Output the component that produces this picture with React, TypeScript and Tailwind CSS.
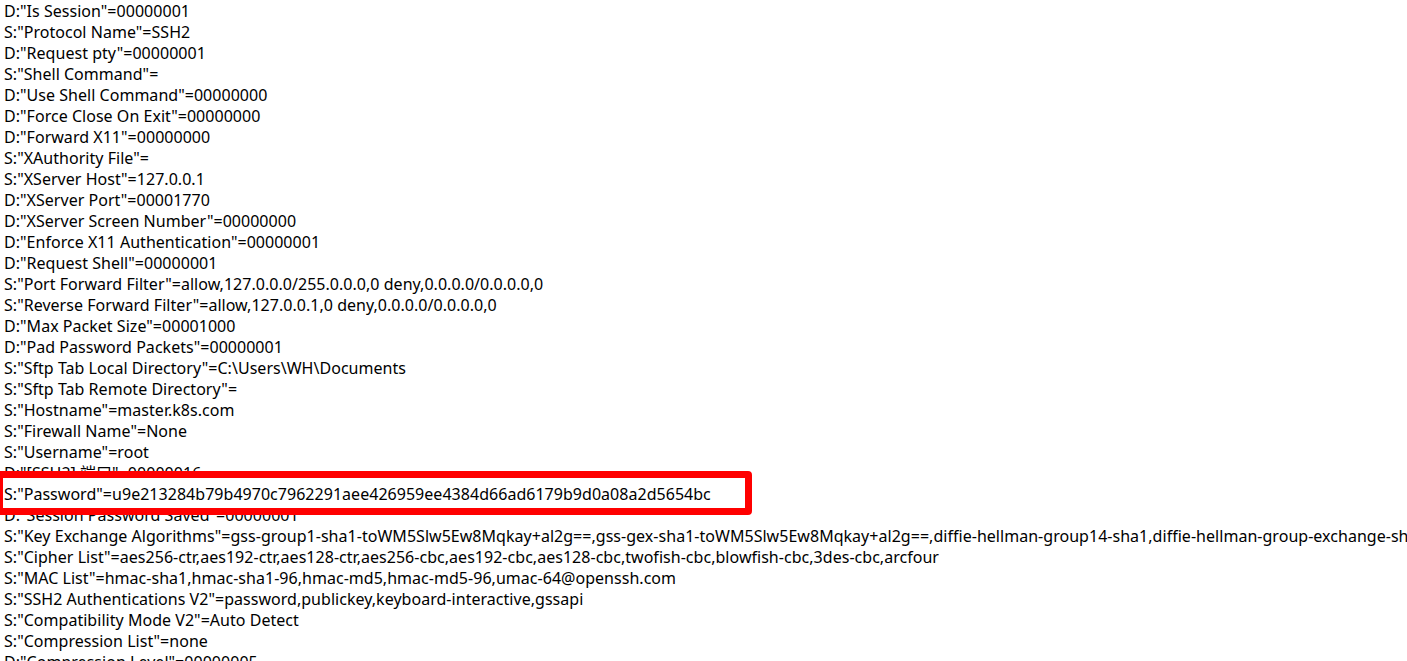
// Session .ini file shown in a plain text viewer, with the password line boxed in red
const LINES: string[] = [
  'D:"Is Session"=00000001',
  'S:"Protocol Name"=SSH2',
  'D:"Request pty"=00000001',
  'S:"Shell Command"=',
  'D:"Use Shell Command"=00000000',
  'D:"Force Close On Exit"=00000000',
  'D:"Forward X11"=00000000',
  'S:"XAuthority File"=',
  'S:"XServer Host"=127.0.0.1',
  'D:"XServer Port"=00001770',
  'D:"XServer Screen Number"=00000000',
  'D:"Enforce X11 Authentication"=00000001',
  'D:"Request Shell"=00000001',
  'S:"Port Forward Filter"=allow,127.0.0.0/255.0.0.0,0 deny,0.0.0.0/0.0.0.0,0',
  'S:"Reverse Forward Filter"=allow,127.0.0.1,0 deny,0.0.0.0/0.0.0.0,0',
  'D:"Max Packet Size"=00001000',
  'D:"Pad Password Packets"=00000001',
  'S:"Sftp Tab Local Directory"=C:\\Users\\WH\\Documents',
  'S:"Sftp Tab Remote Directory"=',
  'S:"Hostname"=master.k8s.com',
  'S:"Firewall Name"=None',
  'S:"Username"=root',
  'D:"[SSH2] 端口"=00000016',
  'S:"Password"=u9e213284b79b4970c7962291aee426959ee4384d66ad6179b9d0a08a2d5654bc',
  'D:"Session Password Saved"=00000001',
  'S:"Key Exchange Algorithms"=gss-group1-sha1-toWM5Slw5Ew8Mqkay+al2g==,gss-gex-sha1-toWM5Slw5Ew8Mqkay+al2g==,diffie-hellman-group14-sha1,diffie-hellman-group-exchange-sha256',
  'S:"Cipher List"=aes256-ctr,aes192-ctr,aes128-ctr,aes256-cbc,aes192-cbc,aes128-cbc,twofish-cbc,blowfish-cbc,3des-cbc,arcfour',
  'S:"MAC List"=hmac-sha1,hmac-sha1-96,hmac-md5,hmac-md5-96,umac-64@openssh.com',
  'S:"SSH2 Authentications V2"=password,publickey,keyboard-interactive,gssapi',
  'S:"Compatibility Mode V2"=Auto Detect',
  'S:"Compression List"=none',
  'D:"Compression Level"=00000005',
]

const PASSWORD_INDEX = 23

export default function App() {
  return (
    <div className="relative h-[661px] w-[1407px] overflow-hidden bg-white text-black">
      <div className="pl-[4px] pt-[1px] font-['Noto_Sans','Noto_Sans_CJK_SC',sans-serif] text-[16px] leading-[21px] tracking-[0.03px] whitespace-pre">
        {LINES.map((line, i) =>
          i === PASSWORD_INDEX ? <div key={i} className="h-[21px]" /> : <div key={i}>{line}</div>
        )}
      </div>

      {/* surlignage du mot de passe */}
      <div className="absolute left-[-4px] top-[471px] h-[44px] w-[756px] rounded-[4px] border-[7px] border-[#ff0000] bg-white">
        <div className="pl-[1px] pt-[6px] font-['Noto_Sans','Noto_Sans_CJK_SC',sans-serif] text-[16px] leading-[21px] tracking-[0.03px] whitespace-pre">
          {LINES[PASSWORD_INDEX]}
        </div>
      </div>
    </div>
  )
}
